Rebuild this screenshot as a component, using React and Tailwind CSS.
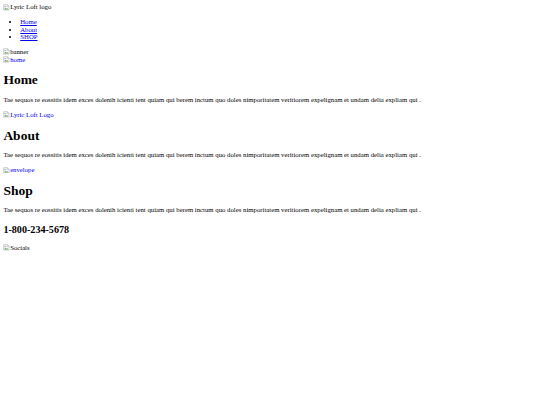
import React from 'react';

const lorem =
    'Tae sequos re eossitis idem exces dolenih icienti tent quiam qui berem inctum quo doles nimporitatem veritiorem expelignam et undam delia expliam qui .';

// what the browser shows for an image that failed to load
const BrokenImage = ({ alt }) => (
    <span className="inline-flex items-start align-bottom">
        <svg width="16" height="16" viewBox="0 0 16 16" className="shrink-0 mt-[1px]">
            <path d="M1.5 1.5h9l4 4v9h-13z" fill="#f3f3f3" stroke="#9a9a9a" />
            <path d="M10.5 1.5v4h4" fill="none" stroke="#9a9a9a" />
            <path d="M3 13l3-4 2 2.5 2-1.5 3 3z" fill="#5fa35a" />
            <circle cx="5" cy="6" r="1.4" fill="#4a8fd6" />
        </svg>
        <span>{alt}</span>
    </span>
);

const App = () => {
    return (
        <div className="min-h-screen bg-white">
            <div className="[zoom:0.421875] m-2 text-[16px] leading-[1.15] text-black font-['Liberation_Serif',serif]">
                {/* Header */}
                <header>
                    <div>
                        <BrokenImage alt="Lyric Loft logo" />
                    </div>
                    <nav>
                        <ul className="my-4 pl-10 list-disc">
                            <li><a href="#" className="text-[#0000ee] underline">Home</a></li>
                            <li><a href="#" className="text-[#0000ee] underline">About</a></li>
                            <li><a href="#" className="text-[#0000ee] underline">SHOP</a></li>
                        </ul>
                    </nav>
                </header>

                <div>
                    <BrokenImage alt="banner" />
                </div>

                {/* Home */}
                <section>
                    <a href="#" className="text-[#0000ee] underline">
                        <BrokenImage alt="home" />
                    </a>
                    <h1 className="text-[32px] font-bold mt-[21.44px] mb-[18px]">Home</h1>
                    <p className="mt-4 mb-[18px]">{lorem}</p>
                </section>

                {/* About */}
                <section>
                    <a href="#" className="text-[#0000ee] underline">
                        <BrokenImage alt="Lyric Loft Logo" />
                    </a>
                    <h1 className="text-[32px] font-bold mt-[21.44px] mb-[18px]">About</h1>
                    <p className="mt-4 mb-[18px]">{lorem}</p>
                </section>

                {/* Shop */}
                <section>
                    <a href="#" className="text-[#0000ee] underline">
                        <BrokenImage alt="envelope" />
                    </a>
                    <h1 className="text-[32px] font-bold mt-[21.44px] mb-[18px]">Shop</h1>
                    <p className="mt-4 mb-[24px]">{lorem}</p>
                </section>

                {/* Footer */}
                <footer>
                    <h2 className="text-[24px] font-bold my-[19.92px]">1-800-234-5678</h2>
                    <BrokenImage alt="Socials" />
                </footer>
            </div>
        </div>
    );
};

export default App;
